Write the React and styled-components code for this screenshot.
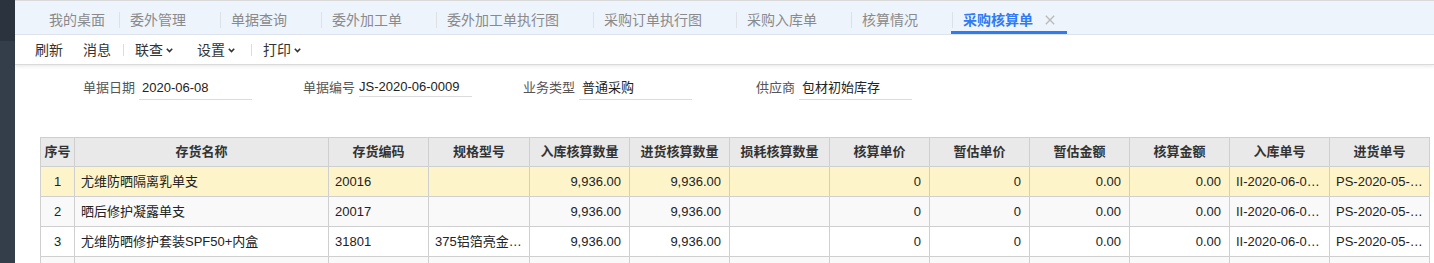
import React from "react";
import styled, { createGlobalStyle, css } from "styled-components";

const FONT = `"Liberation Sans", "Noto Sans CJK SC", sans-serif`;

const Global = createGlobalStyle`
  html, body { margin: 0; padding: 0; background: #fff; }
  body { font-family: ${FONT}; }
  #root { height: 100vh; }
`;

const Shell = styled.div`
  display: flex;
  height: 100vh;
  overflow: hidden;
`;

const Sidebar = styled.aside`
  width: 15px;
  flex: none;
  display: flex;
  flex-direction: column;
  background: #343e4a;
`;

const SidebarTop = styled.div`
  height: 41px;
  flex: none;
  background: #2b333e;
`;

const Main = styled.main`
  flex: 1;
  min-width: 0;
  display: flex;
  flex-direction: column;
  & > * {
    flex: none;
  }
`;

const TabBar = styled.nav`
  display: flex;
  height: 35px;
  box-sizing: border-box;
  border-top: 1px solid #d9d9d9;
  border-bottom: 1px solid #dde3ec;
  background: #eef4fc;
  padding-left: 24px;
`;

const Tab = styled.div`
  position: relative;
  display: flex;
  align-items: center;
  box-sizing: border-box;
  height: 33px;
  padding: 5px ${(p) => (p.$first ? 14 : p.$active ? 12 : 34)}px 0 ${(p) => (p.$first ? 10 : 11)}px;
  font-size: 14px;
  line-height: 20px;
  white-space: nowrap;
  color: ${(p) => (p.$active ? "#2f7bf3" : "#8a8a8a")};
  font-weight: ${(p) => (p.$active ? 700 : 400)};
  ${(p) =>
    !p.$first &&
    css`
      &::before {
        content: "";
        position: absolute;
        left: 0;
        top: 11px;
        width: 1px;
        height: 16px;
        background: #dde1e6;
      }
    `}
  ${(p) =>
    p.$active &&
    css`
      &::after {
        content: "";
        position: absolute;
        left: -1px;
        right: 0;
        bottom: 0;
        height: 3px;
        background: #2f7bf3;
      }
    `}
`;

const CloseIcon = styled.svg`
  width: 10px;
  height: 10px;
  margin-left: 12px;
  flex: none;
`;

const Toolbar = styled.div`
  position: relative;
  z-index: 1;
  display: flex;
  align-items: center;
  height: 30px;
  box-sizing: border-box;
  padding-left: 10px;
  background: #fff;
  border-bottom: 1px solid #dadada;
  box-shadow: 0 2px 3px rgba(0, 0, 0, 0.07);
`;

const ToolButton = styled.div`
  display: flex;
  align-items: center;
  gap: 3px;
  padding: 0 ${(p) => (p.$menu ? 14 : 10)}px 0 10px;
  font-size: 14px;
  line-height: 20px;
  color: #333;
  white-space: nowrap;
`;

const Chevron = styled.svg`
  width: 7px;
  height: 5px;
  margin-top: 1px;
`;

const ToolSep = styled.span`
  width: 1px;
  height: 12px;
  margin: 0 1px 0 2px;
  background: #dcdcdc;
`;

const Form = styled.div`
  display: flex;
  padding: 12px 0 0 17px;
`;

const Field = styled.div`
  display: flex;
  align-items: flex-start;
  width: 220px;
  flex: none;
`;

const Label = styled.span`
  width: 103px;
  margin-right: 4px;
  text-align: right;
  font-size: 13px;
  line-height: 22px;
  color: #555;
  white-space: nowrap;
`;

const Value = styled.div`
  box-sizing: content-box;
  width: ${(p) => (p.$compact ? 113 : 110)}px;
  height: ${(p) => (p.$compact ? 19 : 22)}px;
  padding-left: ${(p) => (p.$compact ? 0 : 3)}px;
  border-bottom: 1px solid #dcdcdc;
  font-size: 13px;
  line-height: ${(p) => (p.$compact ? 19 : 22)}px;
  color: #222;
  white-space: nowrap;
  overflow: hidden;
`;

const Grid = styled.table`
  margin: 37px 0 0 25px;
  width: 1390px;
  box-sizing: border-box;
  table-layout: fixed;
  border-collapse: separate;
  border-spacing: 0;
  border-top: 1px solid #cfcfcf;
  border-left: 1px solid #cfcfcf;
  font-size: 13px;
  color: #333;
`;

const Th = styled.th`
  box-sizing: border-box;
  height: 29px;
  padding: 0;
  background: #e9e9e9;
  border-right: 1px solid #cfcfcf;
  border-bottom: 1px solid #cfcfcf;
  font-weight: 700;
  line-height: 18px;
  text-align: center;
  color: #333;
  white-space: nowrap;
  overflow: hidden;
`;

const Row = styled.tr`
  background: ${(p) =>
    p.$tone === "selected" ? "#fdf4c9" : p.$tone === "even" ? "#f9f9f9" : "#fff"};
`;

const Td = styled.td`
  box-sizing: border-box;
  height: 30px;
  padding: 0 ${(p) => (p.$align === "right" ? 8 : 6)}px 0 6px;
  border-right: 1px solid #cfcfcf;
  border-bottom: 1px solid #cfcfcf;
  line-height: 18px;
  text-align: ${(p) => p.$align || "left"};
  color: #222;
  white-space: nowrap;
  overflow: hidden;
  text-overflow: ellipsis;
`;

const columns = [
  { title: "序号", width: 34, align: "center" },
  { title: "存货名称", width: 254 },
  { title: "存货编码", width: 100 },
  { title: "规格型号", width: 101 },
  { title: "入库核算数量", width: 100, align: "right" },
  { title: "进货核算数量", width: 100, align: "right" },
  { title: "损耗核算数量", width: 100, align: "right" },
  { title: "核算单价", width: 100, align: "right" },
  { title: "暂估单价", width: 100, align: "right" },
  { title: "暂估金额", width: 100, align: "right" },
  { title: "核算金额", width: 100, align: "right" },
  { title: "入库单号", width: 100 },
  { title: "进货单号", width: 100 },
];

const rows = [
  ["1", "尤维防晒隔离乳单支", "20016", "", "9,936.00", "9,936.00", "", "0", "0", "0.00", "0.00", "II-2020-06-0008", "PS-2020-05-0012"],
  ["2", "晒后修护凝露单支", "20017", "", "9,936.00", "9,936.00", "", "0", "0", "0.00", "0.00", "II-2020-06-0008", "PS-2020-05-0012"],
  ["3", "尤维防晒修护套装SPF50+内盒", "31801", "375铝箔亮金色内盒", "9,936.00", "9,936.00", "", "0", "0", "0.00", "0.00", "II-2020-06-0008", "PS-2020-05-0012"],
  ["", "", "", "", "", "", "", "", "", "", "", "", ""],
];

const tabs = ["我的桌面", "委外管理", "单据查询", "委外加工单", "委外加工单执行图", "采购订单执行图", "采购入库单", "核算情况"];

const fields = [
  { label: "单据日期", value: "2020-06-08" },
  { label: "单据编号", value: "JS-2020-06-0009", compact: true },
  { label: "业务类型", value: "普通采购" },
  { label: "供应商", value: "包材初始库存" },
];

function Down() {
  return (
    <Chevron viewBox="0 0 7 5">
      <polyline points="0.8,0.8 3.5,3.6 6.2,0.8" fill="none" stroke="#333" strokeWidth="1.6" />
    </Chevron>
  );
}

export default function App() {
  return (
    <>
      <Global />
      <Shell>
        <Sidebar>
          <SidebarTop />
        </Sidebar>
        <Main>
          <TabBar>
            {tabs.map((t, i) => (
              <Tab key={t} $first={i === 0}>
                {t}
              </Tab>
            ))}
            <Tab $active>
              采购核算单
              <CloseIcon viewBox="0 0 10 10">
                <path d="M0.8 0.8 L9.2 9.2 M9.2 0.8 L0.8 9.2" stroke="#b8b8b8" strokeWidth="1.3" fill="none" />
              </CloseIcon>
            </Tab>
          </TabBar>
          <Toolbar>
            <ToolButton>刷新</ToolButton>
            <ToolButton>消息</ToolButton>
            <ToolSep />
            <ToolButton $menu>
              联查
              <Down />
            </ToolButton>
            <ToolButton $menu>
              设置
              <Down />
            </ToolButton>
            <ToolSep />
            <ToolButton $menu>
              打印
              <Down />
            </ToolButton>
          </Toolbar>
          <Form>
            {fields.map((f) => (
              <Field key={f.label}>
                <Label>{f.label}</Label>
                <Value $compact={f.compact}>{f.value}</Value>
              </Field>
            ))}
          </Form>
          <Grid>
            <thead>
              <tr>
                {columns.map((c) => (
                  <Th key={c.title} style={{ width: c.width }}>
                    {c.title}
                  </Th>
                ))}
              </tr>
            </thead>
            <tbody>
              {rows.map((r, i) => (
                <Row key={i} $tone={i === 0 ? "selected" : i % 2 === 1 ? "even" : "odd"}>
                  {r.map((v, j) => (
                    <Td key={j} $align={columns[j].align}>
                      {v}
                    </Td>
                  ))}
                </Row>
              ))}
            </tbody>
          </Grid>
        </Main>
      </Shell>
    </>
  );
}
